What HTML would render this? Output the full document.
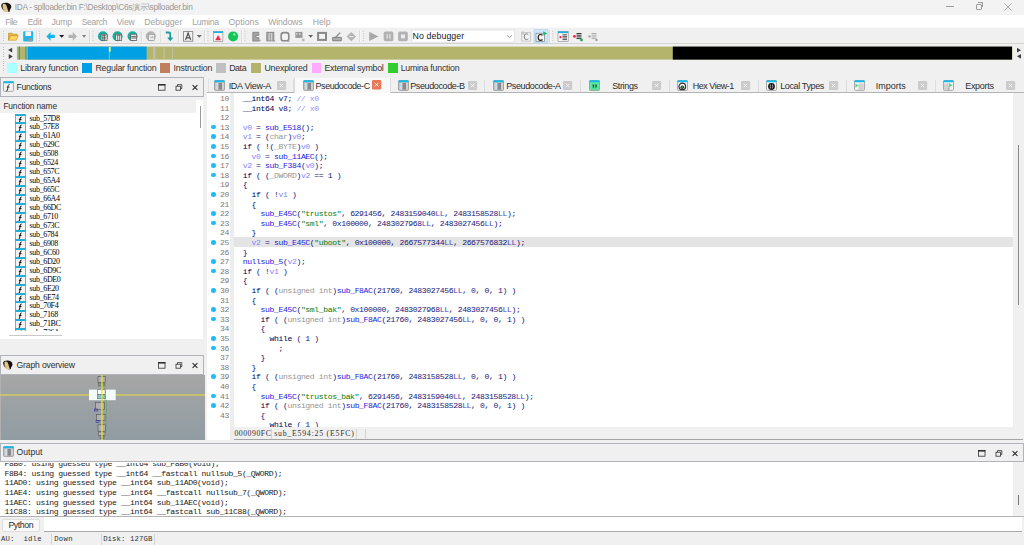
<!DOCTYPE html><html><head><meta charset="utf-8"><style>
*{box-sizing:border-box;margin:0;padding:0}
html,body{width:1024px;height:545px;overflow:hidden;background:#f0f0f0;font-family:'Liberation Sans',sans-serif;}
.a{position:absolute}
.t{position:absolute;white-space:pre}
.ln{position:absolute;left:0;width:24px;text-align:right;color:#7a7a7a}
.dot{position:absolute;left:6px;width:4.6px;height:4.6px;border-radius:50%;background:#1cbcf8}
.cl{position:absolute;white-space:pre;color:#10107a}
.code{font-family:'Liberation Mono',monospace;font-size:8.1px;line-height:9.6px;letter-spacing:-0.38px}
.k{color:#000050}
.f{color:#2020e0}
.v{color:#8484ff}
.c{color:#959595}
.s{color:#0a7a0a}
.n{color:#181878}
.ll{color:#4a4ab4}
.cm{color:#9090ff}
.fi{position:absolute;left:14px;width:11px;height:9px;border:1px solid #6a6a6a;background:#f6f6f6;border-top:2px solid #18b0e0}
.ft{position:absolute;left:29.6px;font-family:'Liberation Serif',serif;font-size:8.0px;letter-spacing:-0.36px;color:#000;line-height:9.2px;white-space:pre}
.ol{position:absolute;left:4.6px;white-space:pre;color:#1a1a1a}
</style></head><body>
<div class="a" style="left:0px;top:0px;width:1024px;height:15px;background:#f3f3f3"></div>
<svg class="a" style="left:0;top:0" width="14" height="14" viewBox="0 0 14 14">
<path d="M1.2 5.2C1.4 3.4 3.5 2.6 6 2.7C8.8 2.8 11.3 4.2 11.3 6.6C11.3 8.2 10.4 9 9.8 10.2C9.4 11.2 9.6 11.9 9.2 12.1L6.5 12C4.5 11.8 2.2 9.5 1.6 7.6Z" fill="#15100c"/>
<path d="M2.8 4.2C3.6 3.6 4.8 3.6 5.6 4.3C6.5 5.2 7 7 7.4 8.6C7.8 10.2 8.4 11.3 8.6 12.1H4.6C3.8 11 3.2 10 2.9 8.8C2.6 7.5 2.4 5.2 2.8 4.2Z" fill="#dcc48c"/>
<path d="M2.6 8.2Q3.4 8.8 3.6 9.4" stroke="#b05a40" stroke-width="0.8" fill="none"/>
</svg>
<div class="t" style="left:14.65px;top:2.00px;font-family:'Liberation Sans',sans-serif;font-size:8.4px;line-height:10px;letter-spacing:-0.310px;color:#9a9a9a;">IDA - splloader.bin F:\Desktop\C6s演示\splloader.bin</div>
<div class="a" style="left:946px;top:6px;width:8px;height:1px;background:#9c9c9c"></div>
<div class="a" style="left:975.5px;top:4px;width:6px;height:6px;border:1px solid #9c9c9c;border-radius:1px"></div>
<div class="a" style="left:977.5px;top:2px;width:5px;height:5px;border-top:1px solid #9c9c9c;border-right:1px solid #9c9c9c;border-top-right-radius:1px"></div>
<svg class="a" style="left:1003px;top:2px" width="10" height="10"><path d="M1.5 1.5L8.5 8.5M8.5 1.5L1.5 8.5" stroke="#9c9c9c" stroke-width="0.8"/></svg>
<div class="a" style="left:0px;top:14.7px;width:1024px;height:12.3px;background:#ffffff"></div>
<div class="t" style="left:5.25px;top:16.80px;font-family:'Liberation Sans',sans-serif;font-size:8.7px;line-height:10px;letter-spacing:-0.567px;color:#a2a2a2;">File</div>
<div class="t" style="left:27.45px;top:16.80px;font-family:'Liberation Sans',sans-serif;font-size:8.7px;line-height:10px;letter-spacing:-0.161px;color:#a2a2a2;">Edit</div>
<div class="t" style="left:51.40px;top:16.80px;font-family:'Liberation Sans',sans-serif;font-size:8.7px;line-height:10px;letter-spacing:-0.183px;color:#a2a2a2;">Jump</div>
<div class="t" style="left:81.65px;top:16.80px;font-family:'Liberation Sans',sans-serif;font-size:8.7px;line-height:10px;letter-spacing:-0.366px;color:#a2a2a2;">Search</div>
<div class="t" style="left:116.65px;top:16.80px;font-family:'Liberation Sans',sans-serif;font-size:8.7px;line-height:10px;letter-spacing:-0.163px;color:#a2a2a2;">View</div>
<div class="t" style="left:144.15px;top:16.80px;font-family:'Liberation Sans',sans-serif;font-size:8.7px;line-height:10px;letter-spacing:0.004px;color:#a2a2a2;">Debugger</div>
<div class="t" style="left:192.15px;top:16.80px;font-family:'Liberation Sans',sans-serif;font-size:8.7px;line-height:10px;letter-spacing:-0.310px;color:#a2a2a2;">Lumina</div>
<div class="t" style="left:228.40px;top:16.80px;font-family:'Liberation Sans',sans-serif;font-size:8.7px;line-height:10px;letter-spacing:0.083px;color:#a2a2a2;">Options</div>
<div class="t" style="left:268.15px;top:16.80px;font-family:'Liberation Sans',sans-serif;font-size:8.7px;line-height:10px;letter-spacing:-0.133px;color:#a2a2a2;">Windows</div>
<div class="t" style="left:312.65px;top:16.80px;font-family:'Liberation Sans',sans-serif;font-size:8.7px;line-height:10px;letter-spacing:0.025px;color:#a2a2a2;">Help</div>
<div class="a" style="left:0px;top:27px;width:1024px;height:17px;background:#f0f0f0;border-top:1px solid #fafafa;border-bottom:1px solid #d4d4d4"></div>
<svg class="a" style="left:0;top:0" width="1024" height="46"><rect x="35.9" y="30.2" width="1" height="12" fill="#d8d8d8"/><rect x="36.9" y="30.2" width="0.8" height="12" fill="#fafafa"/><rect x="89.0" y="30.2" width="1" height="12" fill="#d8d8d8"/><rect x="90.0" y="30.2" width="0.8" height="12" fill="#fafafa"/><rect x="140.9" y="30.2" width="1" height="12" fill="#d8d8d8"/><rect x="141.9" y="30.2" width="0.8" height="12" fill="#fafafa"/><rect x="160.3" y="30.2" width="1" height="12" fill="#d8d8d8"/><rect x="161.3" y="30.2" width="0.8" height="12" fill="#fafafa"/><rect x="178.1" y="30.2" width="1" height="12" fill="#d8d8d8"/><rect x="179.1" y="30.2" width="0.8" height="12" fill="#fafafa"/><rect x="203.9" y="30.2" width="1" height="12" fill="#d8d8d8"/><rect x="204.9" y="30.2" width="0.8" height="12" fill="#fafafa"/><rect x="241.2" y="30.2" width="1" height="12" fill="#d8d8d8"/><rect x="242.2" y="30.2" width="0.8" height="12" fill="#fafafa"/><rect x="359.2" y="30.2" width="1" height="12" fill="#d8d8d8"/><rect x="360.2" y="30.2" width="0.8" height="12" fill="#fafafa"/><rect x="549.1" y="30.2" width="1" height="12" fill="#d8d8d8"/><rect x="550.1" y="30.2" width="0.8" height="12" fill="#fafafa"/><rect x="3.1" y="30.8" width="1" height="1" fill="#c6c6c6"/><rect x="3.1" y="33.1" width="1" height="1" fill="#c6c6c6"/><rect x="3.1" y="35.4" width="1" height="1" fill="#c6c6c6"/><rect x="3.1" y="37.7" width="1" height="1" fill="#c6c6c6"/><rect x="3.1" y="40.0" width="1" height="1" fill="#c6c6c6"/><rect x="39.0" y="30.8" width="1" height="1" fill="#c6c6c6"/><rect x="39.0" y="33.1" width="1" height="1" fill="#c6c6c6"/><rect x="39.0" y="35.4" width="1" height="1" fill="#c6c6c6"/><rect x="39.0" y="37.7" width="1" height="1" fill="#c6c6c6"/><rect x="39.0" y="40.0" width="1" height="1" fill="#c6c6c6"/><rect x="92.5" y="30.8" width="1" height="1" fill="#c6c6c6"/><rect x="92.5" y="33.1" width="1" height="1" fill="#c6c6c6"/><rect x="92.5" y="35.4" width="1" height="1" fill="#c6c6c6"/><rect x="92.5" y="37.7" width="1" height="1" fill="#c6c6c6"/><rect x="92.5" y="40.0" width="1" height="1" fill="#c6c6c6"/><rect x="207.5" y="30.8" width="1" height="1" fill="#c6c6c6"/><rect x="207.5" y="33.1" width="1" height="1" fill="#c6c6c6"/><rect x="207.5" y="35.4" width="1" height="1" fill="#c6c6c6"/><rect x="207.5" y="37.7" width="1" height="1" fill="#c6c6c6"/><rect x="207.5" y="40.0" width="1" height="1" fill="#c6c6c6"/><rect x="244.5" y="30.8" width="1" height="1" fill="#c6c6c6"/><rect x="244.5" y="33.1" width="1" height="1" fill="#c6c6c6"/><rect x="244.5" y="35.4" width="1" height="1" fill="#c6c6c6"/><rect x="244.5" y="37.7" width="1" height="1" fill="#c6c6c6"/><rect x="244.5" y="40.0" width="1" height="1" fill="#c6c6c6"/><rect x="362.9" y="30.8" width="1" height="1" fill="#c6c6c6"/><rect x="362.9" y="33.1" width="1" height="1" fill="#c6c6c6"/><rect x="362.9" y="35.4" width="1" height="1" fill="#c6c6c6"/><rect x="362.9" y="37.7" width="1" height="1" fill="#c6c6c6"/><rect x="362.9" y="40.0" width="1" height="1" fill="#c6c6c6"/><rect x="552.4" y="30.8" width="1" height="1" fill="#c6c6c6"/><rect x="552.4" y="33.1" width="1" height="1" fill="#c6c6c6"/><rect x="552.4" y="35.4" width="1" height="1" fill="#c6c6c6"/><rect x="552.4" y="37.7" width="1" height="1" fill="#c6c6c6"/><rect x="552.4" y="40.0" width="1" height="1" fill="#c6c6c6"/><path d="M8.5 33.2h3.5l1 1h4.2v1.4H10.5l-2 4.6Z" fill="#e6b440" stroke="#b88a20" stroke-width="0.6"/><path d="M8.5 40.2l2-4.6h7.8l-2 4.6Z" fill="#ffd460" stroke="#c0902a" stroke-width="0.6"/><rect x="23.2" y="31.2" width="10" height="10.2" rx="1" fill="#1fb6ea"/><rect x="25.3" y="31.4" width="5.8" height="4.6" fill="#f6f6f6"/><rect x="28.2" y="38.3" width="4" height="3" fill="#9a9a9a"/><path d="M46.4 36.4L50.6 32.1V34.7H54.8V38.1H50.6V40.8Z" fill="#14b4ee"/><path d="M59.2 35H64.2L61.7 37.8Z" fill="#1a1a1a"/><path d="M77 36.4L72.8 32.1V34.7H68.5V38.1H72.8V40.8Z" fill="#b4b4b4"/><path d="M82 35H86.2L84.1 37.8Z" fill="#808080"/><circle cx="102.9" cy="36.3" r="5" fill="#1bb0a0"/><rect x="101.10000000000001" y="34.2" width="6" height="6.2" fill="#f4f4f4" stroke="#505050" stroke-width="0.7"/><path d="M102.10000000000001 35.7h4M102.10000000000001 37.3h4M102.10000000000001 38.9h4M102.9 34.6v5.4M104.5 34.6v5.4" stroke="#404040" stroke-width="0.6"/><circle cx="117.5" cy="36.3" r="5" fill="#1bb0a0"/><rect x="115.7" y="34.2" width="6" height="6.2" fill="#f4f4f4" stroke="#505050" stroke-width="0.7"/><path d="M116.7 35.2h4M117.7 35.2v4.8M119.7 35.2v4.8" stroke="#404040" stroke-width="0.7"/><circle cx="132.5" cy="36.3" r="5" fill="#1bb0a0"/><rect x="130.7" y="34.2" width="6" height="6.2" fill="#f4f4f4" stroke="#505050" stroke-width="0.7"/><path d="M131.3 36.4h4.8M131.3 38.0h4.8" stroke="#404040" stroke-width="0.8"/><circle cx="150.8" cy="36.3" r="5" fill="#b4b4b4"/><rect x="148.5" y="34.3" width="6" height="6" fill="#eeeeee" stroke="#909090" stroke-width="0.6"/><path d="M149.8 37.3h3M152 36.1l1.2 1.2-1.2 1.2" stroke="#909090" stroke-width="0.6" fill="none"/><path d="M165.8 32.5H168.8Q170.2 32.5 170.2 34V38.2" stroke="#1c9c9c" stroke-width="1.8" fill="none"/><path d="M167.2 37.5H173.3L170.2 41.2Z" fill="#1c9c9c"/><rect x="183.5" y="31.6" width="9.3" height="9.6" fill="#f2f2f2" stroke="#7a7a7a" stroke-width="0.8"/><path d="M185.5 39.9L188.1 33.1L190.7 39.9M186.4 37.8H189.8" stroke="#505050" stroke-width="1.25" fill="none"/><path d="M196.7 35H201.9L199.3 37.7Z" fill="#6a6a6a"/><rect x="213.3" y="31.4" width="9.6" height="9.9" fill="#f4f4f4" stroke="#8a8a8a" stroke-width="0.6"/><rect x="213.3" y="31.4" width="9.6" height="1.6" fill="#18b0e0"/><path d="M215.2 40.3L218.1 35.1L221 40.3Z" fill="#f0284e"/><circle cx="233.1" cy="36.4" r="5" fill="#12c656"/><circle cx="234.3" cy="34.4" r="1.2" fill="#90f0b0"/><path d="M252.8 32.3h6v3.2h-3v2h3v3.6h-6Z" fill="#a4a4a4" stroke="#858585" stroke-width="0.9"/><circle cx="259.6" cy="40.6" r="1" fill="#a0a0a0"/><rect x="266.8" y="32.3" width="7" height="8.6" fill="#a8a8a8" stroke="#868686" stroke-width="0.9"/><path d="M269.2 33v7.5M271.6 33v7.5" stroke="#dadada" stroke-width="0.9"/><circle cx="274.3" cy="40.8" r="0.9" fill="#a0a0a0"/><rect x="281.2" y="32.6" width="7.6" height="8.2" rx="2.4" fill="#f2f2f2" stroke="#8a8a8a" stroke-width="1.6"/><circle cx="288.6" cy="41" r="0.9" fill="#a0a0a0"/><rect x="295.3" y="31.9" width="7.2" height="6" fill="#9a9a9a"/><path d="M296.8 33.2v1.6M299.8 33.2v1.6" stroke="#f0f0f0" stroke-width="1"/><circle cx="303.3" cy="40" r="1.4" fill="#b8b8b8"/><path d="M308.4 35H313L310.7 37.7Z" fill="#606060"/><rect x="318.1" y="32.9" width="7.899999999999977" height="7" fill="#f4f4f4" stroke="#888888" stroke-width="2"/><path d="M332.7 37.4h8.6v3.4h-8.6Z" fill="#b0b0b0" stroke="#808080" stroke-width="1"/><path d="M334.9 38.2L340.09999999999997 32.6" stroke="#8a8a8a" stroke-width="1.3"/><path d="M351.3 32l4.7 4.6-4.7 4.6-4.7-4.6Z" fill="#b4b4b4"/><rect x="349.3" y="36.1" width="4" height="1" fill="#f0f0f0"/><path d="M369.2 31.8L378.4 36.4L369.2 41Z" fill="#a8a8a8"/><rect x="383.7" y="31.6" width="9.7" height="9.6" rx="1.6" fill="#b2b2b2"/><rect x="386.6" y="34.3" width="1.2" height="4.2" fill="#e8e8e8"/><rect x="389.3" y="34.3" width="1.2" height="4.2" fill="#e8e8e8"/><rect x="398.1" y="31.6" width="9.7" height="9.6" rx="1.6" fill="#b2b2b2"/><rect x="401" y="34.4" width="4" height="4" fill="#ececec"/><rect x="411.8" y="30" width="102.7" height="12.2" fill="#ffffff" stroke="#dcdcdc" stroke-width="0.7"/><path d="M507 35.2L509.5 37.6L512 35.2" stroke="#707070" stroke-width="0.7" fill="none"/><rect x="521.8" y="32.3" width="8.6" height="8.8" fill="#f2f2f2" stroke="#b0b0b0" stroke-width="0.6"/><rect x="521.2" y="31.6" width="3" height="3" fill="#c8c8c8"/><path d="M528.3 34.6Q527.6 33.8 526.4 33.8Q524.2 33.8 524.2 36.7Q524.2 39.6 526.4 39.6Q527.6 39.6 528.3 38.8" stroke="#7a7a7a" stroke-width="1" fill="none"/><rect x="534" y="29.5" width="14" height="13.5" rx="1" fill="#cde6fa" stroke="#a6d0f4" stroke-width="0.6"/><rect x="536" y="33.2" width="8.6" height="8.4" fill="#f4f4f4" stroke="#707070" stroke-width="0.6"/><path d="M542.5 35.4Q541.8 34.5 540.5 34.5Q538.2 34.5 538.2 37.4Q538.2 40.3 540.5 40.3Q541.8 40.3 542.5 39.5" stroke="#202020" stroke-width="1.2" fill="none"/><path d="M543.3 31.2L547.1 33.4L543.3 35.6Z" fill="#20b860"/><rect x="558" y="31.4" width="10.2" height="10" fill="#f4f4f4" stroke="#8a8a8a" stroke-width="0.6"/><rect x="558" y="31.4" width="10.2" height="1.7" fill="#18b0e0"/><circle cx="560.5" cy="37.2" r="1.1" fill="#e8204a"/><path d="M562.5 34.8h4.5M562.5 36.4h4.5M562.5 38h4.5M562.5 39.6h4.5" stroke="#303030" stroke-width="0.8"/><circle cx="574.5" cy="36.4" r="1.4" fill="#f0204a"/><path d="M576.5 33.5h5M576.5 35.2h5M576.5 36.9h5M576.5 38.6h5" stroke="#202020" stroke-width="0.9"/><circle cx="581.5" cy="40" r="1.4" fill="#18b058"/><circle cx="589.5" cy="36.4" r="1.2" fill="#a0a0a0"/><path d="M591.5 33.5h5M591.5 35.2h5M591.5 36.9h5M591.5 38.6h5" stroke="#a8a8a8" stroke-width="0.9"/><circle cx="596.5" cy="40" r="1.3" fill="#a8a8a8"/></svg>
<div class="t" style="left:412.55px;top:30.90px;font-family:'Liberation Sans',sans-serif;font-size:8.8px;line-height:10px;letter-spacing:0.083px;color:#1a1a1a;">No debugger</div>
<div class="a" style="left:0px;top:44px;width:1024px;height:33px;background:#f0f0f0"></div>
<svg class="a" style="left:0;top:44" width="1024" height="20">
<rect x="16.9" y="2.6" width="995.5" height="13" fill="#b4b46c"/>
<rect x="18.8" y="2.6" width="1.2" height="13" fill="#10a0d0"/>
<rect x="25.3" y="2.6" width="1.3" height="13" fill="#10a0d8"/>
<rect x="27.8" y="2.6" width="118.8" height="13" fill="#00a0e4"/>
<rect x="26.6" y="2.6" width="1.2" height="13" fill="#80b090"/>
<rect x="153.2" y="2.6" width="2" height="13" fill="#c0c0c0"/>
<rect x="163.6" y="2.6" width="1" height="13" fill="#c4c4b0"/>
<rect x="172" y="2.6" width="1" height="13" fill="#c0c0a0"/>
<rect x="108.9" y="2.6" width="0.7" height="13" fill="#c8c890"/>
<rect x="108.9" y="3" width="1.8" height="4.6" fill="#f8f870"/>
<rect x="672.8" y="2.6" width="339.2" height="13" fill="#000000"/>
<path d="M8.1 6.1L12.2 3.8V8.4Z" fill="#404040"/>
<path d="M8.75 10L12.8 12.5L8.75 15Z" fill="#404040"/>
<path d="M1021 3.8L1017 6.2L1021 8.5Z" fill="#404040" transform="translate(2038 0) scale(-1 1)"/>
<path d="M1021 9.9L1017 12.3L1021 14.8Z" fill="#404040"/>
</svg>
<div class="a" style="left:2.7px;top:47.0px;width:1px;height:1px;background:#c0c0c0"></div>
<div class="a" style="left:2.7px;top:49.3px;width:1px;height:1px;background:#c0c0c0"></div>
<div class="a" style="left:2.7px;top:51.6px;width:1px;height:1px;background:#c0c0c0"></div>
<div class="a" style="left:2.7px;top:53.9px;width:1px;height:1px;background:#c0c0c0"></div>
<div class="a" style="left:2.7px;top:56.2px;width:1px;height:1px;background:#c0c0c0"></div>
<div class="a" style="left:2.7px;top:58.5px;width:1px;height:1px;background:#c0c0c0"></div>
<div class="a" style="left:2.7px;top:60.8px;width:1px;height:1px;background:#c0c0c0"></div>
<div class="a" style="left:2.7px;top:63.099999999999994px;width:1px;height:1px;background:#c0c0c0"></div>
<div class="a" style="left:2.7px;top:65.4px;width:1px;height:1px;background:#c0c0c0"></div>
<div class="a" style="left:2.7px;top:67.7px;width:1px;height:1px;background:#c0c0c0"></div>
<div class="a" style="left:2.7px;top:70.0px;width:1px;height:1px;background:#c0c0c0"></div>
<div class="a" style="left:6.9px;top:63.2px;width:9.8px;height:9.8px;background:#aaffff"></div>
<div class="t" style="left:20.25px;top:62.80px;font-family:'Liberation Sans',sans-serif;font-size:8.8px;line-height:10px;letter-spacing:-0.137px;color:#303030;">Library function</div>
<div class="a" style="left:82px;top:63.2px;width:9.8px;height:9.8px;background:#00a0e4"></div>
<div class="t" style="left:95.40px;top:62.80px;font-family:'Liberation Sans',sans-serif;font-size:8.8px;line-height:10px;letter-spacing:-0.191px;color:#303030;">Regular function</div>
<div class="a" style="left:160px;top:63.2px;width:9.8px;height:9.8px;background:#c08060"></div>
<div class="t" style="left:173.40px;top:62.80px;font-family:'Liberation Sans',sans-serif;font-size:8.8px;line-height:10px;letter-spacing:-0.164px;color:#303030;">Instruction</div>
<div class="a" style="left:216.25px;top:63.2px;width:9.8px;height:9.8px;background:#c0c0c0"></div>
<div class="t" style="left:229.15px;top:62.80px;font-family:'Liberation Sans',sans-serif;font-size:8.8px;line-height:10px;letter-spacing:-0.381px;color:#303030;">Data</div>
<div class="a" style="left:250.75px;top:63.2px;width:9.8px;height:9.8px;background:#b4b46c"></div>
<div class="t" style="left:264.40px;top:62.80px;font-family:'Liberation Sans',sans-serif;font-size:8.8px;line-height:10px;letter-spacing:-0.200px;color:#303030;">Unexplored</div>
<div class="a" style="left:311.5px;top:63.2px;width:9.8px;height:9.8px;background:#ffaaff"></div>
<div class="t" style="left:324.40px;top:62.80px;font-family:'Liberation Sans',sans-serif;font-size:8.8px;line-height:10px;letter-spacing:-0.225px;color:#303030;">External symbol</div>
<div class="a" style="left:387.75px;top:63.2px;width:9.8px;height:9.8px;background:#33cc33"></div>
<div class="t" style="left:400.65px;top:62.80px;font-family:'Liberation Sans',sans-serif;font-size:8.8px;line-height:10px;letter-spacing:-0.226px;color:#303030;">Lumina function</div>
<div class="a" style="left:0px;top:77px;width:204.2px;height:19.5px;background:#f0f0f0;border:1px solid #b0b4b8"></div>
<svg class="a" style="left:2.6px;top:80.8px" width="11" height="11"><rect x="0.5" y="0.6" width="10" height="9.8" rx="1" fill="#f2f2f2" stroke="#8c8c8c" stroke-width="0.7"/><rect x="0.3" y="0.3" width="10.4" height="2" rx="0.8" fill="#1ab8e6"/><path d="M6.5 3.6Q5.5 3.4 5.2 4.6L4.4 9.4Q4.1 10.2 3.3 9.9M3.8 6.1H6.4" stroke="#222" stroke-width="0.9" fill="none"/></svg>
<div class="t" style="left:16.55px;top:81.90px;font-family:'Liberation Sans',sans-serif;font-size:8.6px;line-height:10px;letter-spacing:-0.296px;color:#2e2e2e;">Functions</div>
<svg class="a" style="left:158.2px;top:83.7px" width="45" height="8"><rect x="0.4" y="0.4" width="6.6" height="5.8" fill="none" stroke="#303030" stroke-width="0.8"/><rect x="0" y="0" width="7.4" height="1.6" fill="#303030"/><rect x="18" y="2.2" width="4.4" height="4" fill="none" stroke="#303030" stroke-width="0.8"/><path d="M19.5 2.2V0.6H23.8V4.6H22.4" fill="none" stroke="#303030" stroke-width="0.8"/><path d="M34.6 1.2L39.4 5.8M39.4 1.2L34.6 5.8" stroke="#282828" stroke-width="1.1"/></svg>
<div class="a" style="left:0px;top:96.5px;width:202.5px;height:242px;background:#ffffff"></div>
<div class="a" style="left:195.6px;top:96.5px;width:7px;height:3px;background:#f0f0f0"></div>
<div class="a" style="left:0px;top:96.5px;width:195.6px;height:16px;background:#f0f0f0"></div>
<div class="t" style="left:3.40px;top:100.80px;font-family:'Liberation Sans',sans-serif;font-size:8.4px;line-height:10px;letter-spacing:-0.146px;color:#2e2e2e;">Function name</div>
<div class="a" style="left:199.5px;top:106px;width:1px;height:21.5px;background:#9a9a9a"></div>
<div class="a" style="left:0;top:113px;width:196px;height:218.3px;overflow:hidden">
<svg class="a" style="left:14.8px;top:0.50px" width="11" height="10"><rect x="0.4" y="0.4" width="10" height="9.2" fill="#f4f4f4" stroke="#7a7a7a" stroke-width="0.7"/><rect x="0.4" y="0.2" width="10" height="1.8" fill="#18b0e0"/><path d="M6.6 3Q5.6 2.8 5.3 4L4.5 8.6Q4.2 9.4 3.4 9.1M3.9 5.4H6.5" stroke="#111" stroke-width="1" fill="none"/></svg>
<div class="ft" style="top:0.50px">sub_57D8</div>
<svg class="a" style="left:14.8px;top:9.45px" width="11" height="10"><rect x="0.4" y="0.4" width="10" height="9.2" fill="#f4f4f4" stroke="#7a7a7a" stroke-width="0.7"/><rect x="0.4" y="0.2" width="10" height="1.8" fill="#18b0e0"/><path d="M6.6 3Q5.6 2.8 5.3 4L4.5 8.6Q4.2 9.4 3.4 9.1M3.9 5.4H6.5" stroke="#111" stroke-width="1" fill="none"/></svg>
<div class="ft" style="top:9.45px">sub_57E8</div>
<svg class="a" style="left:14.8px;top:18.40px" width="11" height="10"><rect x="0.4" y="0.4" width="10" height="9.2" fill="#f4f4f4" stroke="#7a7a7a" stroke-width="0.7"/><rect x="0.4" y="0.2" width="10" height="1.8" fill="#18b0e0"/><path d="M6.6 3Q5.6 2.8 5.3 4L4.5 8.6Q4.2 9.4 3.4 9.1M3.9 5.4H6.5" stroke="#111" stroke-width="1" fill="none"/></svg>
<div class="ft" style="top:18.40px">sub_61A0</div>
<svg class="a" style="left:14.8px;top:27.35px" width="11" height="10"><rect x="0.4" y="0.4" width="10" height="9.2" fill="#f4f4f4" stroke="#7a7a7a" stroke-width="0.7"/><rect x="0.4" y="0.2" width="10" height="1.8" fill="#18b0e0"/><path d="M6.6 3Q5.6 2.8 5.3 4L4.5 8.6Q4.2 9.4 3.4 9.1M3.9 5.4H6.5" stroke="#111" stroke-width="1" fill="none"/></svg>
<div class="ft" style="top:27.35px">sub_629C</div>
<svg class="a" style="left:14.8px;top:36.30px" width="11" height="10"><rect x="0.4" y="0.4" width="10" height="9.2" fill="#f4f4f4" stroke="#7a7a7a" stroke-width="0.7"/><rect x="0.4" y="0.2" width="10" height="1.8" fill="#18b0e0"/><path d="M6.6 3Q5.6 2.8 5.3 4L4.5 8.6Q4.2 9.4 3.4 9.1M3.9 5.4H6.5" stroke="#111" stroke-width="1" fill="none"/></svg>
<div class="ft" style="top:36.30px">sub_6508</div>
<svg class="a" style="left:14.8px;top:45.25px" width="11" height="10"><rect x="0.4" y="0.4" width="10" height="9.2" fill="#f4f4f4" stroke="#7a7a7a" stroke-width="0.7"/><rect x="0.4" y="0.2" width="10" height="1.8" fill="#18b0e0"/><path d="M6.6 3Q5.6 2.8 5.3 4L4.5 8.6Q4.2 9.4 3.4 9.1M3.9 5.4H6.5" stroke="#111" stroke-width="1" fill="none"/></svg>
<div class="ft" style="top:45.25px">sub_6524</div>
<svg class="a" style="left:14.8px;top:54.20px" width="11" height="10"><rect x="0.4" y="0.4" width="10" height="9.2" fill="#f4f4f4" stroke="#7a7a7a" stroke-width="0.7"/><rect x="0.4" y="0.2" width="10" height="1.8" fill="#18b0e0"/><path d="M6.6 3Q5.6 2.8 5.3 4L4.5 8.6Q4.2 9.4 3.4 9.1M3.9 5.4H6.5" stroke="#111" stroke-width="1" fill="none"/></svg>
<div class="ft" style="top:54.20px">sub_657C</div>
<svg class="a" style="left:14.8px;top:63.15px" width="11" height="10"><rect x="0.4" y="0.4" width="10" height="9.2" fill="#f4f4f4" stroke="#7a7a7a" stroke-width="0.7"/><rect x="0.4" y="0.2" width="10" height="1.8" fill="#18b0e0"/><path d="M6.6 3Q5.6 2.8 5.3 4L4.5 8.6Q4.2 9.4 3.4 9.1M3.9 5.4H6.5" stroke="#111" stroke-width="1" fill="none"/></svg>
<div class="ft" style="top:63.15px">sub_65A4</div>
<svg class="a" style="left:14.8px;top:72.10px" width="11" height="10"><rect x="0.4" y="0.4" width="10" height="9.2" fill="#f4f4f4" stroke="#7a7a7a" stroke-width="0.7"/><rect x="0.4" y="0.2" width="10" height="1.8" fill="#18b0e0"/><path d="M6.6 3Q5.6 2.8 5.3 4L4.5 8.6Q4.2 9.4 3.4 9.1M3.9 5.4H6.5" stroke="#111" stroke-width="1" fill="none"/></svg>
<div class="ft" style="top:72.10px">sub_665C</div>
<svg class="a" style="left:14.8px;top:81.05px" width="11" height="10"><rect x="0.4" y="0.4" width="10" height="9.2" fill="#f4f4f4" stroke="#7a7a7a" stroke-width="0.7"/><rect x="0.4" y="0.2" width="10" height="1.8" fill="#18b0e0"/><path d="M6.6 3Q5.6 2.8 5.3 4L4.5 8.6Q4.2 9.4 3.4 9.1M3.9 5.4H6.5" stroke="#111" stroke-width="1" fill="none"/></svg>
<div class="ft" style="top:81.05px">sub_66A4</div>
<svg class="a" style="left:14.8px;top:90.00px" width="11" height="10"><rect x="0.4" y="0.4" width="10" height="9.2" fill="#f4f4f4" stroke="#7a7a7a" stroke-width="0.7"/><rect x="0.4" y="0.2" width="10" height="1.8" fill="#18b0e0"/><path d="M6.6 3Q5.6 2.8 5.3 4L4.5 8.6Q4.2 9.4 3.4 9.1M3.9 5.4H6.5" stroke="#111" stroke-width="1" fill="none"/></svg>
<div class="ft" style="top:90.00px">sub_66DC</div>
<svg class="a" style="left:14.8px;top:98.95px" width="11" height="10"><rect x="0.4" y="0.4" width="10" height="9.2" fill="#f4f4f4" stroke="#7a7a7a" stroke-width="0.7"/><rect x="0.4" y="0.2" width="10" height="1.8" fill="#18b0e0"/><path d="M6.6 3Q5.6 2.8 5.3 4L4.5 8.6Q4.2 9.4 3.4 9.1M3.9 5.4H6.5" stroke="#111" stroke-width="1" fill="none"/></svg>
<div class="ft" style="top:98.95px">sub_6710</div>
<svg class="a" style="left:14.8px;top:107.90px" width="11" height="10"><rect x="0.4" y="0.4" width="10" height="9.2" fill="#f4f4f4" stroke="#7a7a7a" stroke-width="0.7"/><rect x="0.4" y="0.2" width="10" height="1.8" fill="#18b0e0"/><path d="M6.6 3Q5.6 2.8 5.3 4L4.5 8.6Q4.2 9.4 3.4 9.1M3.9 5.4H6.5" stroke="#111" stroke-width="1" fill="none"/></svg>
<div class="ft" style="top:107.90px">sub_673C</div>
<svg class="a" style="left:14.8px;top:116.85px" width="11" height="10"><rect x="0.4" y="0.4" width="10" height="9.2" fill="#f4f4f4" stroke="#7a7a7a" stroke-width="0.7"/><rect x="0.4" y="0.2" width="10" height="1.8" fill="#18b0e0"/><path d="M6.6 3Q5.6 2.8 5.3 4L4.5 8.6Q4.2 9.4 3.4 9.1M3.9 5.4H6.5" stroke="#111" stroke-width="1" fill="none"/></svg>
<div class="ft" style="top:116.85px">sub_6784</div>
<svg class="a" style="left:14.8px;top:125.80px" width="11" height="10"><rect x="0.4" y="0.4" width="10" height="9.2" fill="#f4f4f4" stroke="#7a7a7a" stroke-width="0.7"/><rect x="0.4" y="0.2" width="10" height="1.8" fill="#18b0e0"/><path d="M6.6 3Q5.6 2.8 5.3 4L4.5 8.6Q4.2 9.4 3.4 9.1M3.9 5.4H6.5" stroke="#111" stroke-width="1" fill="none"/></svg>
<div class="ft" style="top:125.80px">sub_6908</div>
<svg class="a" style="left:14.8px;top:134.75px" width="11" height="10"><rect x="0.4" y="0.4" width="10" height="9.2" fill="#f4f4f4" stroke="#7a7a7a" stroke-width="0.7"/><rect x="0.4" y="0.2" width="10" height="1.8" fill="#18b0e0"/><path d="M6.6 3Q5.6 2.8 5.3 4L4.5 8.6Q4.2 9.4 3.4 9.1M3.9 5.4H6.5" stroke="#111" stroke-width="1" fill="none"/></svg>
<div class="ft" style="top:134.75px">sub_6C60</div>
<svg class="a" style="left:14.8px;top:143.70px" width="11" height="10"><rect x="0.4" y="0.4" width="10" height="9.2" fill="#f4f4f4" stroke="#7a7a7a" stroke-width="0.7"/><rect x="0.4" y="0.2" width="10" height="1.8" fill="#18b0e0"/><path d="M6.6 3Q5.6 2.8 5.3 4L4.5 8.6Q4.2 9.4 3.4 9.1M3.9 5.4H6.5" stroke="#111" stroke-width="1" fill="none"/></svg>
<div class="ft" style="top:143.70px">sub_6D20</div>
<svg class="a" style="left:14.8px;top:152.65px" width="11" height="10"><rect x="0.4" y="0.4" width="10" height="9.2" fill="#f4f4f4" stroke="#7a7a7a" stroke-width="0.7"/><rect x="0.4" y="0.2" width="10" height="1.8" fill="#18b0e0"/><path d="M6.6 3Q5.6 2.8 5.3 4L4.5 8.6Q4.2 9.4 3.4 9.1M3.9 5.4H6.5" stroke="#111" stroke-width="1" fill="none"/></svg>
<div class="ft" style="top:152.65px">sub_6D9C</div>
<svg class="a" style="left:14.8px;top:161.60px" width="11" height="10"><rect x="0.4" y="0.4" width="10" height="9.2" fill="#f4f4f4" stroke="#7a7a7a" stroke-width="0.7"/><rect x="0.4" y="0.2" width="10" height="1.8" fill="#18b0e0"/><path d="M6.6 3Q5.6 2.8 5.3 4L4.5 8.6Q4.2 9.4 3.4 9.1M3.9 5.4H6.5" stroke="#111" stroke-width="1" fill="none"/></svg>
<div class="ft" style="top:161.60px">sub_6DE0</div>
<svg class="a" style="left:14.8px;top:170.55px" width="11" height="10"><rect x="0.4" y="0.4" width="10" height="9.2" fill="#f4f4f4" stroke="#7a7a7a" stroke-width="0.7"/><rect x="0.4" y="0.2" width="10" height="1.8" fill="#18b0e0"/><path d="M6.6 3Q5.6 2.8 5.3 4L4.5 8.6Q4.2 9.4 3.4 9.1M3.9 5.4H6.5" stroke="#111" stroke-width="1" fill="none"/></svg>
<div class="ft" style="top:170.55px">sub_6E20</div>
<svg class="a" style="left:14.8px;top:179.50px" width="11" height="10"><rect x="0.4" y="0.4" width="10" height="9.2" fill="#f4f4f4" stroke="#7a7a7a" stroke-width="0.7"/><rect x="0.4" y="0.2" width="10" height="1.8" fill="#18b0e0"/><path d="M6.6 3Q5.6 2.8 5.3 4L4.5 8.6Q4.2 9.4 3.4 9.1M3.9 5.4H6.5" stroke="#111" stroke-width="1" fill="none"/></svg>
<div class="ft" style="top:179.50px">sub_6E74</div>
<svg class="a" style="left:14.8px;top:188.45px" width="11" height="10"><rect x="0.4" y="0.4" width="10" height="9.2" fill="#f4f4f4" stroke="#7a7a7a" stroke-width="0.7"/><rect x="0.4" y="0.2" width="10" height="1.8" fill="#18b0e0"/><path d="M6.6 3Q5.6 2.8 5.3 4L4.5 8.6Q4.2 9.4 3.4 9.1M3.9 5.4H6.5" stroke="#111" stroke-width="1" fill="none"/></svg>
<div class="ft" style="top:188.45px">sub_70F4</div>
<svg class="a" style="left:14.8px;top:197.40px" width="11" height="10"><rect x="0.4" y="0.4" width="10" height="9.2" fill="#f4f4f4" stroke="#7a7a7a" stroke-width="0.7"/><rect x="0.4" y="0.2" width="10" height="1.8" fill="#18b0e0"/><path d="M6.6 3Q5.6 2.8 5.3 4L4.5 8.6Q4.2 9.4 3.4 9.1M3.9 5.4H6.5" stroke="#111" stroke-width="1" fill="none"/></svg>
<div class="ft" style="top:197.40px">sub_7168</div>
<svg class="a" style="left:14.8px;top:206.35px" width="11" height="10"><rect x="0.4" y="0.4" width="10" height="9.2" fill="#f4f4f4" stroke="#7a7a7a" stroke-width="0.7"/><rect x="0.4" y="0.2" width="10" height="1.8" fill="#18b0e0"/><path d="M6.6 3Q5.6 2.8 5.3 4L4.5 8.6Q4.2 9.4 3.4 9.1M3.9 5.4H6.5" stroke="#111" stroke-width="1" fill="none"/></svg>
<div class="ft" style="top:206.35px">sub_71BC</div>
<svg class="a" style="left:14.8px;top:215.30px" width="11" height="10"><rect x="0.4" y="0.4" width="10" height="9.2" fill="#f4f4f4" stroke="#7a7a7a" stroke-width="0.7"/><rect x="0.4" y="0.2" width="10" height="1.8" fill="#18b0e0"/><path d="M6.6 3Q5.6 2.8 5.3 4L4.5 8.6Q4.2 9.4 3.4 9.1M3.9 5.4H6.5" stroke="#111" stroke-width="1" fill="none"/></svg>
<div class="ft" style="top:215.30px">sub_7264</div>
</div>
<div class="a" style="left:9px;top:334.8px;width:52.5px;height:1.5px;background:#cacaca"></div>
<div class="a" style="left:0px;top:355.3px;width:204.2px;height:19.7px;background:#f0f0f0;border:1px solid #b0b4b8"></div>
<svg class="a" style="left:1.5px;top:358px" width="13" height="13" viewBox="0 0 14 14">
<path d="M1.2 5.2C1.4 3.4 3.5 2.6 6 2.7C8.8 2.8 11.3 4.2 11.3 6.6C11.3 8.2 10.4 9 9.8 10.2C9.4 11.2 9.6 11.9 9.2 12.1L6.5 12C4.5 11.8 2.2 9.5 1.6 7.6Z" fill="#15100c"/>
<path d="M2.8 4.2C3.6 3.6 4.8 3.6 5.6 4.3C6.5 5.2 7 7 7.4 8.6C7.8 10.2 8.4 11.3 8.6 12.1H4.6C3.8 11 3.2 10 2.9 8.8C2.6 7.5 2.4 5.2 2.8 4.2Z" fill="#dcc48c"/>
<path d="M2.6 8.2Q3.4 8.8 3.6 9.4" stroke="#b05a40" stroke-width="0.8" fill="none"/>
</svg>
<div class="t" style="left:16.55px;top:360.30px;font-family:'Liberation Sans',sans-serif;font-size:8.6px;line-height:10px;letter-spacing:-0.145px;color:#2e2e2e;">Graph overview</div>
<svg class="a" style="left:158.2px;top:362.0px" width="45" height="8"><rect x="0.4" y="0.4" width="6.6" height="5.8" fill="none" stroke="#303030" stroke-width="0.8"/><rect x="0" y="0" width="7.4" height="1.6" fill="#303030"/><rect x="18" y="2.2" width="4.4" height="4" fill="none" stroke="#303030" stroke-width="0.8"/><path d="M19.5 2.2V0.6H23.8V4.6H22.4" fill="none" stroke="#303030" stroke-width="0.8"/><path d="M34.6 1.2L39.4 5.8M39.4 1.2L34.6 5.8" stroke="#282828" stroke-width="1.1"/></svg>
<div class="a" style="left:0px;top:375px;width:204.5px;height:65px;background:linear-gradient(#a6a6a6,#909ca2);border-left:1px solid #b0b0b0"></div>
<svg class="a" style="left:0;top:375px" width="205" height="65">
<rect x="0" y="19.4" width="205" height="1.2" fill="#e0d450"/>
<rect x="89" y="14.6" width="26.7" height="10.6" fill="#f2fafa"/>
<rect x="98" y="1.5" width="7.2" height="6" fill="#b0b0b0" stroke="#505050" stroke-width="0.6"/>
<rect x="98.5" y="8" width="6" height="3" fill="#909090" stroke="#406040" stroke-width="0.5"/>
<rect x="97.5" y="14.8" width="8" height="4.4" fill="#ffffff" stroke="#505050" stroke-width="0.5"/>
<rect x="97.5" y="19.8" width="8" height="4" fill="#90c8c8" stroke="#505050" stroke-width="0.5"/>
<rect x="95.5" y="27.5" width="9" height="7" fill="#b0b0b0" stroke="#505050" stroke-width="0.6"/>
<rect x="94.5" y="34" width="3" height="2" fill="none" stroke="#3030a0" stroke-width="0.6"/>
<rect x="96.5" y="39.5" width="8.5" height="6" fill="#b0b0b0" stroke="#505050" stroke-width="0.6"/>
<rect x="96" y="45.5" width="3" height="2" fill="none" stroke="#3030a0" stroke-width="0.6"/>
<rect x="98" y="49.8" width="7.5" height="6.4" fill="#b0b0b0" stroke="#505050" stroke-width="0.6"/>
<rect x="98.5" y="57" width="6.5" height="3.6" fill="#b0b0b0" stroke="#505050" stroke-width="0.5"/>
<rect x="100" y="60.6" width="4" height="3" fill="#909090" stroke="#505050" stroke-width="0.5"/>
<path d="M105 8V26M106.5 25V40M106 40V56" stroke="#50a050" stroke-width="0.5" fill="none"/>
<rect x="101.3" y="0" width="1.3" height="65" fill="#ece030"/>
</svg>
<div class="a" style="left:205px;top:79px;width:819px;height:14px;background:#f0f0f0"></div>
<div class="a" style="left:206.5px;top:92px;width:817.5px;height:1px;background:#b4b4b4"></div>
<div class="a" style="left:208.2px;top:79px;width:1px;height:13px;background:#e2e2e2"></div>
<div class="a" style="left:293.0px;top:79.5px;width:1px;height:12.5px;background:#dcdcdc"></div>
<svg class="a" style="left:214.3px;top:79.6px" width="11" height="11"><rect x="0.5" y="0.6" width="10" height="9.8" rx="1" fill="#c4c4c4" stroke="#8c8c8c" stroke-width="0.7"/><rect x="0.3" y="0.3" width="10.4" height="2" rx="0.8" fill="#1ab8e6"/><rect x="2.3" y="3" width="1.6" height="6.6" fill="#c8e4f4"/><rect x="4.6" y="3" width="3.6" height="6.6" fill="#8a8a8a"/><rect x="8.2" y="3" width="1.4" height="6.6" fill="#d8d8d8"/></svg>
<div class="t" style="left:228.65px;top:80.70px;font-family:'Liberation Sans',sans-serif;font-size:9.0px;line-height:10px;letter-spacing:-0.295px;color:#2e2e2e;">IDA View-A</div>
<svg class="a" style="left:277px;top:80.6px" width="10" height="10"><rect x="0" y="0" width="9.2" height="9" rx="1.3" fill="#cbcbcb"/><path d="M2.8 2.7L6.4 6.3M6.4 2.7L2.8 6.3" stroke="#f4f4f4" stroke-width="1"/></svg>
<div class="a" style="left:293.5px;top:77.7px;width:97.5px;height:15.5px;background:#f9f9f9;border-left:1px solid #dedede;border-right:1px solid #dedede"></div>
<svg class="a" style="left:302.6px;top:79.6px" width="11" height="11"><rect x="0.5" y="0.6" width="10" height="9.8" rx="1" fill="#c4c4c4" stroke="#8c8c8c" stroke-width="0.7"/><rect x="0.3" y="0.3" width="10.4" height="2" rx="0.8" fill="#1ab8e6"/><rect x="2.3" y="3" width="1.6" height="6.6" fill="#c8e4f4"/><rect x="4.6" y="3" width="3.6" height="6.6" fill="#8a8a8a"/><rect x="8.2" y="3" width="1.4" height="6.6" fill="#d8d8d8"/></svg>
<div class="t" style="left:315.55px;top:80.70px;font-family:'Liberation Sans',sans-serif;font-size:9.0px;line-height:10px;letter-spacing:-0.450px;color:#2e2e2e;">Pseudocode-C</div>
<svg class="a" style="left:372.2px;top:80.1px" width="10" height="10"><rect x="0" y="0" width="9.3" height="9.4" rx="1.2" fill="#e8785a"/><path d="M2.8 2.8L6.5 6.5M6.5 2.8L2.8 6.5" stroke="#fff" stroke-width="0.9"/></svg>
<div class="a" style="left:484.25px;top:79.5px;width:1px;height:12.5px;background:#dcdcdc"></div>
<svg class="a" style="left:397.55px;top:79.6px" width="11" height="11"><rect x="0.5" y="0.6" width="10" height="9.8" rx="1" fill="#c4c4c4" stroke="#8c8c8c" stroke-width="0.7"/><rect x="0.3" y="0.3" width="10.4" height="2" rx="0.8" fill="#1ab8e6"/><rect x="2.3" y="3" width="1.6" height="6.6" fill="#c8e4f4"/><rect x="4.6" y="3" width="3.6" height="6.6" fill="#8a8a8a"/><rect x="8.2" y="3" width="1.4" height="6.6" fill="#d8d8d8"/></svg>
<div class="t" style="left:410.15px;top:80.70px;font-family:'Liberation Sans',sans-serif;font-size:9.0px;line-height:10px;letter-spacing:-0.372px;color:#2e2e2e;">Pseudocode-B</div>
<svg class="a" style="left:468px;top:80.6px" width="10" height="10"><rect x="0" y="0" width="9.2" height="9" rx="1.3" fill="#cbcbcb"/><path d="M2.8 2.7L6.4 6.3M6.4 2.7L2.8 6.3" stroke="#f4f4f4" stroke-width="1"/></svg>
<div class="a" style="left:579.5px;top:79.5px;width:1px;height:12.5px;background:#dcdcdc"></div>
<svg class="a" style="left:492.8px;top:79.6px" width="11" height="11"><rect x="0.5" y="0.6" width="10" height="9.8" rx="1" fill="#c4c4c4" stroke="#8c8c8c" stroke-width="0.7"/><rect x="0.3" y="0.3" width="10.4" height="2" rx="0.8" fill="#1ab8e6"/><rect x="2.3" y="3" width="1.6" height="6.6" fill="#c8e4f4"/><rect x="4.6" y="3" width="3.6" height="6.6" fill="#8a8a8a"/><rect x="8.2" y="3" width="1.4" height="6.6" fill="#d8d8d8"/></svg>
<div class="t" style="left:506.15px;top:80.70px;font-family:'Liberation Sans',sans-serif;font-size:9.0px;line-height:10px;letter-spacing:-0.372px;color:#2e2e2e;">Pseudocode-A</div>
<svg class="a" style="left:563px;top:80.6px" width="10" height="10"><rect x="0" y="0" width="9.2" height="9" rx="1.3" fill="#cbcbcb"/><path d="M2.8 2.7L6.4 6.3M6.4 2.7L2.8 6.3" stroke="#f4f4f4" stroke-width="1"/></svg>
<div class="a" style="left:669.0px;top:79.5px;width:1px;height:12.5px;background:#dcdcdc"></div>
<svg class="a" style="left:588.6999999999999px;top:79.6px" width="11" height="11"><rect x="0.5" y="0.6" width="10" height="9.8" rx="1" fill="#5ee6a0" stroke="#8c8c8c" stroke-width="0.7"/><rect x="0.3" y="0.3" width="10.4" height="2" rx="0.8" fill="#1ab8e6"/><path d="M3.6 4.6h1.5v1.8l-0.7 1.8h-0.8l0.5-1.6h-0.5ZM6.3 4.6h1.5v1.8l-0.7 1.8h-0.8l0.5-1.6h-0.5Z" fill="#0a5a30"/></svg>
<div class="t" style="left:612.15px;top:80.70px;font-family:'Liberation Sans',sans-serif;font-size:9.0px;line-height:10px;letter-spacing:-0.344px;color:#2e2e2e;">Strings</div>
<svg class="a" style="left:652px;top:80.6px" width="10" height="10"><rect x="0" y="0" width="9.2" height="9" rx="1.3" fill="#cbcbcb"/><path d="M2.8 2.7L6.4 6.3M6.4 2.7L2.8 6.3" stroke="#f4f4f4" stroke-width="1"/></svg>
<div class="a" style="left:757.5px;top:79.5px;width:1px;height:12.5px;background:#dcdcdc"></div>
<svg class="a" style="left:677.3px;top:79.6px" width="11" height="11"><rect x="0.5" y="0.6" width="10" height="9.8" rx="1" fill="#f4f4f4" stroke="#8c8c8c" stroke-width="0.7"/><rect x="0.3" y="0.3" width="10.4" height="2" rx="0.8" fill="#1ab8e6"/><circle cx="5.3" cy="6.4" r="3.3" fill="none" stroke="#303030" stroke-width="1.2"/><circle cx="5.3" cy="7.2" r="1.8" fill="#303030"/><path d="M4.7 6.2L6.3 7.2L4.7 8.2Z" fill="#30d070"/></svg>
<div class="t" style="left:692.65px;top:80.70px;font-family:'Liberation Sans',sans-serif;font-size:9.0px;line-height:10px;letter-spacing:-0.462px;color:#2e2e2e;">Hex View-1</div>
<svg class="a" style="left:740.5px;top:80.6px" width="10" height="10"><rect x="0" y="0" width="9.2" height="9" rx="1.3" fill="#cbcbcb"/><path d="M2.8 2.7L6.4 6.3M6.4 2.7L2.8 6.3" stroke="#f4f4f4" stroke-width="1"/></svg>
<div class="a" style="left:846.25px;top:79.5px;width:1px;height:12.5px;background:#dcdcdc"></div>
<svg class="a" style="left:766.0999999999999px;top:79.6px" width="11" height="11"><rect x="0.5" y="0.6" width="10" height="9.8" rx="1" fill="#f4f4f4" stroke="#8c8c8c" stroke-width="0.7"/><rect x="0.3" y="0.3" width="10.4" height="2" rx="0.8" fill="#1ab8e6"/><circle cx="5.5" cy="6.5" r="3.4" fill="#1a1a1a"/><path d="M5 4.6Q4.2 4.6 4.4 5.6Q4.5 6.4 3.9 6.5Q4.5 6.6 4.4 7.4Q4.2 8.4 5 8.4M6 4.6Q6.8 4.6 6.6 5.6Q6.5 6.4 7.1 6.5Q6.5 6.6 6.6 7.4Q6.8 8.4 6 8.4" stroke="#f0f0f0" stroke-width="0.6" fill="none"/></svg>
<div class="t" style="left:780.15px;top:80.70px;font-family:'Liberation Sans',sans-serif;font-size:9.0px;line-height:10px;letter-spacing:-0.367px;color:#2e2e2e;">Local Types</div>
<svg class="a" style="left:829px;top:80.6px" width="10" height="10"><rect x="0" y="0" width="9.2" height="9" rx="1.3" fill="#cbcbcb"/><path d="M2.8 2.7L6.4 6.3M6.4 2.7L2.8 6.3" stroke="#f4f4f4" stroke-width="1"/></svg>
<div class="a" style="left:934.5px;top:79.5px;width:1px;height:12.5px;background:#dcdcdc"></div>
<svg class="a" style="left:853.8px;top:79.6px" width="11" height="11"><rect x="0.5" y="0.6" width="10" height="9.8" rx="1" fill="#f4f4f4" stroke="#8c8c8c" stroke-width="0.7"/><rect x="0.3" y="0.3" width="10.4" height="2" rx="0.8" fill="#1ab8e6"/><rect x="4.6" y="3.6" width="5" height="6.2" fill="#c8c8c8"/><path d="M5.8 3.6v6.2M7.2 3.6v6.2M8.6 3.6v6.2" stroke="#e0e0e0" stroke-width="0.5"/><path d="M1.4 3.4L4.6 5.6L1.4 7.8Z" fill="#50e080"/></svg>
<div class="t" style="left:875.65px;top:80.70px;font-family:'Liberation Sans',sans-serif;font-size:9.0px;line-height:10px;letter-spacing:0.031px;color:#2e2e2e;">Imports</div>
<svg class="a" style="left:917.5px;top:80.6px" width="10" height="10"><rect x="0" y="0" width="9.2" height="9" rx="1.3" fill="#cbcbcb"/><path d="M2.8 2.7L6.4 6.3M6.4 2.7L2.8 6.3" stroke="#f4f4f4" stroke-width="1"/></svg>
<div class="a" style="left:1023.5px;top:79.5px;width:1px;height:12.5px;background:#dcdcdc"></div>
<svg class="a" style="left:942.8px;top:79.6px" width="11" height="11"><rect x="0.5" y="0.6" width="10" height="9.8" rx="1" fill="#f4f4f4" stroke="#8c8c8c" stroke-width="0.7"/><rect x="0.3" y="0.3" width="10.4" height="2" rx="0.8" fill="#1ab8e6"/><rect x="1.2" y="3.6" width="5" height="6.2" fill="#c8c8c8"/><path d="M2.4 3.6v6.2M3.8 3.6v6.2M5.2 3.6v6.2" stroke="#e0e0e0" stroke-width="0.5"/><path d="M6 3L9.6 5.3L6 7.6Z" fill="#50e080"/><path d="M6 7.6V10" stroke="#606060" stroke-width="0.5"/></svg>
<div class="t" style="left:965.15px;top:80.70px;font-family:'Liberation Sans',sans-serif;font-size:9.0px;line-height:10px;letter-spacing:-0.261px;color:#2e2e2e;">Exports</div>
<svg class="a" style="left:1005.5px;top:80.6px" width="10" height="10"><rect x="0" y="0" width="9.2" height="9" rx="1.3" fill="#cbcbcb"/><path d="M2.8 2.7L6.4 6.3M6.4 2.7L2.8 6.3" stroke="#f4f4f4" stroke-width="1"/></svg>
<div class="a" style="left:206.5px;top:93px;width:806.5px;height:347px;background:#ffffff"></div>
<div class="a" style="left:230.3px;top:93px;width:3.4px;height:347px;background:#ededed"></div>
<div class="a" style="left:233.7px;top:237.3px;width:779.3px;height:9.4px;background:#e4e4e4"></div>
<div class="a" style="left:1013px;top:93px;width:11px;height:347px;background:#f0f0f0"></div>
<div class="a" style="left:1017.9px;top:144.6px;width:1.1px;height:160px;background:#8a8a8a"></div>
<div class="a code" style="left:205px;top:93px;width:808px;height:334.4px;overflow:hidden">
<div class="ln" style="top:0.90px">10</div>
<div class="cl" style="left:28.7px;top:0.90px">  <span class="k">__int64</span> v7; <span class="cm">// x0</span></div>
<div class="ln" style="top:10.50px">11</div>
<div class="cl" style="left:28.7px;top:10.50px">  <span class="k">__int64</span> v8; <span class="cm">// x0</span></div>
<div class="ln" style="top:20.10px">12</div>
<div class="cl" style="left:28.7px;top:20.10px"></div>
<div class="ln" style="top:29.70px">13</div>
<div class="dot" style="top:31.80px"></div>
<div class="cl" style="left:28.7px;top:29.70px">  <span class="v">v0</span> = <span class="f">sub_E518</span>();</div>
<div class="ln" style="top:39.30px">14</div>
<div class="dot" style="top:41.40px"></div>
<div class="cl" style="left:28.7px;top:39.30px">  <span class="v">v1</span> = (<span class="c">char</span>)<span class="v">v0</span>;</div>
<div class="ln" style="top:48.90px">15</div>
<div class="dot" style="top:51.00px"></div>
<div class="cl" style="left:28.7px;top:48.90px">  <span class="k">if</span> ( !(<span class="c">_BYTE</span>)<span class="v">v0</span> )</div>
<div class="ln" style="top:58.50px">16</div>
<div class="dot" style="top:60.60px"></div>
<div class="cl" style="left:28.7px;top:58.50px">    <span class="v">v0</span> = <span class="f">sub_11AEC</span>();</div>
<div class="ln" style="top:68.10px">17</div>
<div class="dot" style="top:70.20px"></div>
<div class="cl" style="left:28.7px;top:68.10px">  <span class="v">v2</span> = <span class="f">sub_F384</span>(<span class="v">v0</span>);</div>
<div class="ln" style="top:77.70px">18</div>
<div class="dot" style="top:79.80px"></div>
<div class="cl" style="left:28.7px;top:77.70px">  <span class="k">if</span> ( (<span class="c">_DWORD</span>)<span class="v">v2</span> == <span class="n">1</span> )</div>
<div class="ln" style="top:87.30px">19</div>
<div class="cl" style="left:28.7px;top:87.30px">  {</div>
<div class="ln" style="top:96.90px">20</div>
<div class="dot" style="top:99.00px"></div>
<div class="cl" style="left:28.7px;top:96.90px">    <span class="k">if</span> ( !<span class="v">v1</span> )</div>
<div class="ln" style="top:106.50px">21</div>
<div class="cl" style="left:28.7px;top:106.50px">    {</div>
<div class="ln" style="top:116.10px">22</div>
<div class="dot" style="top:118.20px"></div>
<div class="cl" style="left:28.7px;top:116.10px">      <span class="f">sub_E45C</span>(<span class="s">&quot;trustos&quot;</span>, <span class="n">6291456</span>, <span class="n">2483159040</span><span class="ll">LL</span>, <span class="n">2483158528</span><span class="ll">LL</span>);</div>
<div class="ln" style="top:125.70px">23</div>
<div class="dot" style="top:127.80px"></div>
<div class="cl" style="left:28.7px;top:125.70px">      <span class="f">sub_E45C</span>(<span class="s">&quot;sml&quot;</span>, <span class="n">0x100000</span>, <span class="n">2483027968</span><span class="ll">LL</span>, <span class="n">2483027456</span><span class="ll">LL</span>);</div>
<div class="ln" style="top:135.30px">24</div>
<div class="cl" style="left:28.7px;top:135.30px">    }</div>
<div class="ln" style="top:144.90px">25</div>
<div class="dot" style="top:147.00px"></div>
<div class="cl" style="left:28.7px;top:144.90px">    <span class="v">v2</span> = <span class="f">sub_E45C</span>(<span class="s">&quot;uboot&quot;</span>, <span class="n">0x100000</span>, <span class="n">2667577344</span><span class="ll">LL</span>, <span class="n">2667576832</span><span class="ll">LL</span>);</div>
<div class="ln" style="top:154.50px">26</div>
<div class="cl" style="left:28.7px;top:154.50px">  }</div>
<div class="ln" style="top:164.10px">27</div>
<div class="dot" style="top:166.20px"></div>
<div class="cl" style="left:28.7px;top:164.10px">  <span class="f">nullsub_5</span>(<span class="v">v2</span>);</div>
<div class="ln" style="top:173.70px">28</div>
<div class="dot" style="top:175.80px"></div>
<div class="cl" style="left:28.7px;top:173.70px">  <span class="k">if</span> ( !<span class="v">v1</span> )</div>
<div class="ln" style="top:183.30px">29</div>
<div class="cl" style="left:28.7px;top:183.30px">  {</div>
<div class="ln" style="top:192.90px">30</div>
<div class="dot" style="top:195.00px"></div>
<div class="cl" style="left:28.7px;top:192.90px">    <span class="k">if</span> ( (<span class="c">unsigned int</span>)<span class="f">sub_F8AC</span>(<span class="n">21760</span>, <span class="n">2483027456</span><span class="ll">LL</span>, <span class="n">0</span>, <span class="n">0</span>, <span class="n">1</span>) )</div>
<div class="ln" style="top:202.50px">31</div>
<div class="cl" style="left:28.7px;top:202.50px">    {</div>
<div class="ln" style="top:212.10px">32</div>
<div class="dot" style="top:214.20px"></div>
<div class="cl" style="left:28.7px;top:212.10px">      <span class="f">sub_E45C</span>(<span class="s">&quot;sml_bak&quot;</span>, <span class="n">0x100000</span>, <span class="n">2483027968</span><span class="ll">LL</span>, <span class="n">2483027456</span><span class="ll">LL</span>);</div>
<div class="ln" style="top:221.70px">33</div>
<div class="dot" style="top:223.80px"></div>
<div class="cl" style="left:28.7px;top:221.70px">      <span class="k">if</span> ( (<span class="c">unsigned int</span>)<span class="f">sub_F8AC</span>(<span class="n">21760</span>, <span class="n">2483027456</span><span class="ll">LL</span>, <span class="n">0</span>, <span class="n">0</span>, <span class="n">1</span>) )</div>
<div class="ln" style="top:231.30px">34</div>
<div class="cl" style="left:28.7px;top:231.30px">      {</div>
<div class="ln" style="top:240.90px">35</div>
<div class="dot" style="top:243.00px"></div>
<div class="cl" style="left:28.7px;top:240.90px">        <span class="k">while</span> ( <span class="n">1</span> )</div>
<div class="ln" style="top:250.50px">36</div>
<div class="dot" style="top:252.60px"></div>
<div class="cl" style="left:28.7px;top:250.50px">          ;</div>
<div class="ln" style="top:260.10px">37</div>
<div class="cl" style="left:28.7px;top:260.10px">      }</div>
<div class="ln" style="top:269.70px">38</div>
<div class="cl" style="left:28.7px;top:269.70px">    }</div>
<div class="ln" style="top:279.30px">39</div>
<div class="dot" style="top:281.40px"></div>
<div class="cl" style="left:28.7px;top:279.30px">    <span class="k">if</span> ( (<span class="c">unsigned int</span>)<span class="f">sub_F8AC</span>(<span class="n">21760</span>, <span class="n">2483158528</span><span class="ll">LL</span>, <span class="n">0</span>, <span class="n">0</span>, <span class="n">1</span>) )</div>
<div class="ln" style="top:288.90px">40</div>
<div class="cl" style="left:28.7px;top:288.90px">    {</div>
<div class="ln" style="top:298.50px">41</div>
<div class="dot" style="top:300.60px"></div>
<div class="cl" style="left:28.7px;top:298.50px">      <span class="f">sub_E45C</span>(<span class="s">&quot;trustos_bak&quot;</span>, <span class="n">6291456</span>, <span class="n">2483159040</span><span class="ll">LL</span>, <span class="n">2483158528</span><span class="ll">LL</span>);</div>
<div class="ln" style="top:308.10px">42</div>
<div class="dot" style="top:310.20px"></div>
<div class="cl" style="left:28.7px;top:308.10px">      <span class="k">if</span> ( (<span class="c">unsigned int</span>)<span class="f">sub_F8AC</span>(<span class="n">21760</span>, <span class="n">2483158528</span><span class="ll">LL</span>, <span class="n">0</span>, <span class="n">0</span>, <span class="n">1</span>) )</div>
<div class="ln" style="top:317.70px">43</div>
<div class="cl" style="left:28.7px;top:317.70px">      {</div>
<div class="cl" style="left:28.7px;top:327.30px">        <span class="k">while</span> ( <span class="n">1</span> )</div>
</div>
<div class="a" style="left:233.6px;top:427.4px;width:789.4px;height:12.6px;background:#f0f0f0;border-bottom:1px solid #a4a4a4"></div>
<div class="t" style="left:234.45px;top:429.30px;font-family:'Liberation Serif',serif;font-size:7.8px;line-height:9px;letter-spacing:0.495px;color:#303030;">000090FC</div>
<div class="a" style="left:271.3px;top:428.5px;width:1px;height:10px;background:#d4d4d4"></div>
<div class="t" style="left:274.15px;top:429.30px;font-family:'Liberation Serif',serif;font-size:7.8px;line-height:9px;letter-spacing:0.776px;color:#303030;">sub_E594:25 (E5FC)</div>
<div class="a" style="left:356px;top:429px;width:1px;height:10px;background:#d4d4d4"></div>
<div class="a" style="left:364.5px;top:429px;width:1px;height:10px;background:#d4d4d4"></div>
<div class="a" style="left:0px;top:440px;width:1024px;height:2.5px;background:#f0f0f0"></div>
<div class="a" style="left:0px;top:442.5px;width:1024px;height:19px;background:#f0f0f0;border:1px solid #b0b4b8"></div>
<svg class="a" style="left:2.6px;top:446.3px" width="11" height="11"><rect x="0.5" y="0.6" width="10" height="9.8" rx="1" fill="#c4c4c4" stroke="#8c8c8c" stroke-width="0.7"/><rect x="0.3" y="0.3" width="10.4" height="2" rx="0.8" fill="#1ab8e6"/><rect x="2.3" y="3" width="1.6" height="6.6" fill="#c8e4f4"/><rect x="4.6" y="3" width="3.6" height="6.6" fill="#8a8a8a"/><rect x="8.2" y="3" width="1.4" height="6.6" fill="#d8d8d8"/></svg>
<div class="t" style="left:16.55px;top:447.30px;font-family:'Liberation Sans',sans-serif;font-size:8.6px;line-height:10px;letter-spacing:-0.002px;color:#2e2e2e;">Output</div>
<svg class="a" style="left:978.0px;top:449.5px" width="45" height="8"><rect x="0.4" y="0.4" width="6.6" height="5.8" fill="none" stroke="#303030" stroke-width="0.8"/><rect x="0" y="0" width="7.4" height="1.6" fill="#303030"/><rect x="18" y="2.2" width="4.4" height="4" fill="none" stroke="#303030" stroke-width="0.8"/><path d="M19.5 2.2V0.6H23.8V4.6H22.4" fill="none" stroke="#303030" stroke-width="0.8"/><path d="M34.6 1.2L39.4 5.8M39.4 1.2L34.6 5.8" stroke="#282828" stroke-width="1.1"/></svg>
<div class="a" style="left:0px;top:461.5px;width:1013px;height:55px;background:#ffffff"></div>
<div class="a code" style="left:0;top:463px;width:1013px;height:53px;overflow:hidden">
<div class="ol" style="top:-3.70px">F8B0: using guessed type __int64 sub_F8B0(void);</div>
<div class="ol" style="top:5.85px">F8B4: using guessed type __int64 __fastcall nullsub_5(_QWORD);</div>
<div class="ol" style="top:15.40px">11AD0: using guessed type __int64 sub_11AD0(void);</div>
<div class="ol" style="top:24.95px">11AE4: using guessed type __int64 __fastcall nullsub_7(_QWORD);</div>
<div class="ol" style="top:34.50px">11AEC: using guessed type __int64 sub_11AEC(void);</div>
<div class="ol" style="top:44.05px">11C88: using guessed type __int64 __fastcall sub_11C88(_QWORD);</div>
</div>
<div class="a" style="left:1013px;top:461.5px;width:11px;height:55px;background:#f0f0f0"></div>
<div class="a" style="left:1018px;top:494.7px;width:1px;height:10px;background:#7a7a7a"></div>
<div class="a" style="left:0px;top:516px;width:1024px;height:16px;background:#f0f0f0;border-top:1px solid #b4b4b4"></div>
<div class="a" style="left:2px;top:519px;width:38.2px;height:12.5px;background:#f9f9f9;border:1px solid #dedede;border-radius:2px"></div>
<div class="t" style="left:8.45px;top:519.90px;font-family:'Liberation Sans',sans-serif;font-size:8.8px;line-height:10px;letter-spacing:-0.458px;color:#2e2e2e;">Python</div>
<div class="a" style="left:44px;top:517px;width:978px;height:14.5px;background:#ffffff;border-bottom:1px solid #a8a8a8"></div>
<div class="t" style="left:0.95px;top:535.00px;font-family:'Liberation Mono',monospace;font-size:7.3px;line-height:8px;letter-spacing:0.147px;color:#303030;">AU:  idle</div>
<div class="a" style="left:51px;top:533.5px;width:1px;height:11px;background:#d4d4d4"></div>
<div class="t" style="left:54.15px;top:535.00px;font-family:'Liberation Mono',monospace;font-size:7.3px;line-height:8px;letter-spacing:0.295px;color:#303030;">Down</div>
<div class="a" style="left:100.5px;top:533.5px;width:1px;height:11px;background:#d4d4d4"></div>
<div class="t" style="left:103.15px;top:535.00px;font-family:'Liberation Mono',monospace;font-size:7.3px;line-height:8px;letter-spacing:0.103px;color:#303030;">Disk: 127GB</div>
<div class="a" style="left:153.5px;top:533.5px;width:1px;height:11px;background:#d4d4d4"></div>
</body></html>
